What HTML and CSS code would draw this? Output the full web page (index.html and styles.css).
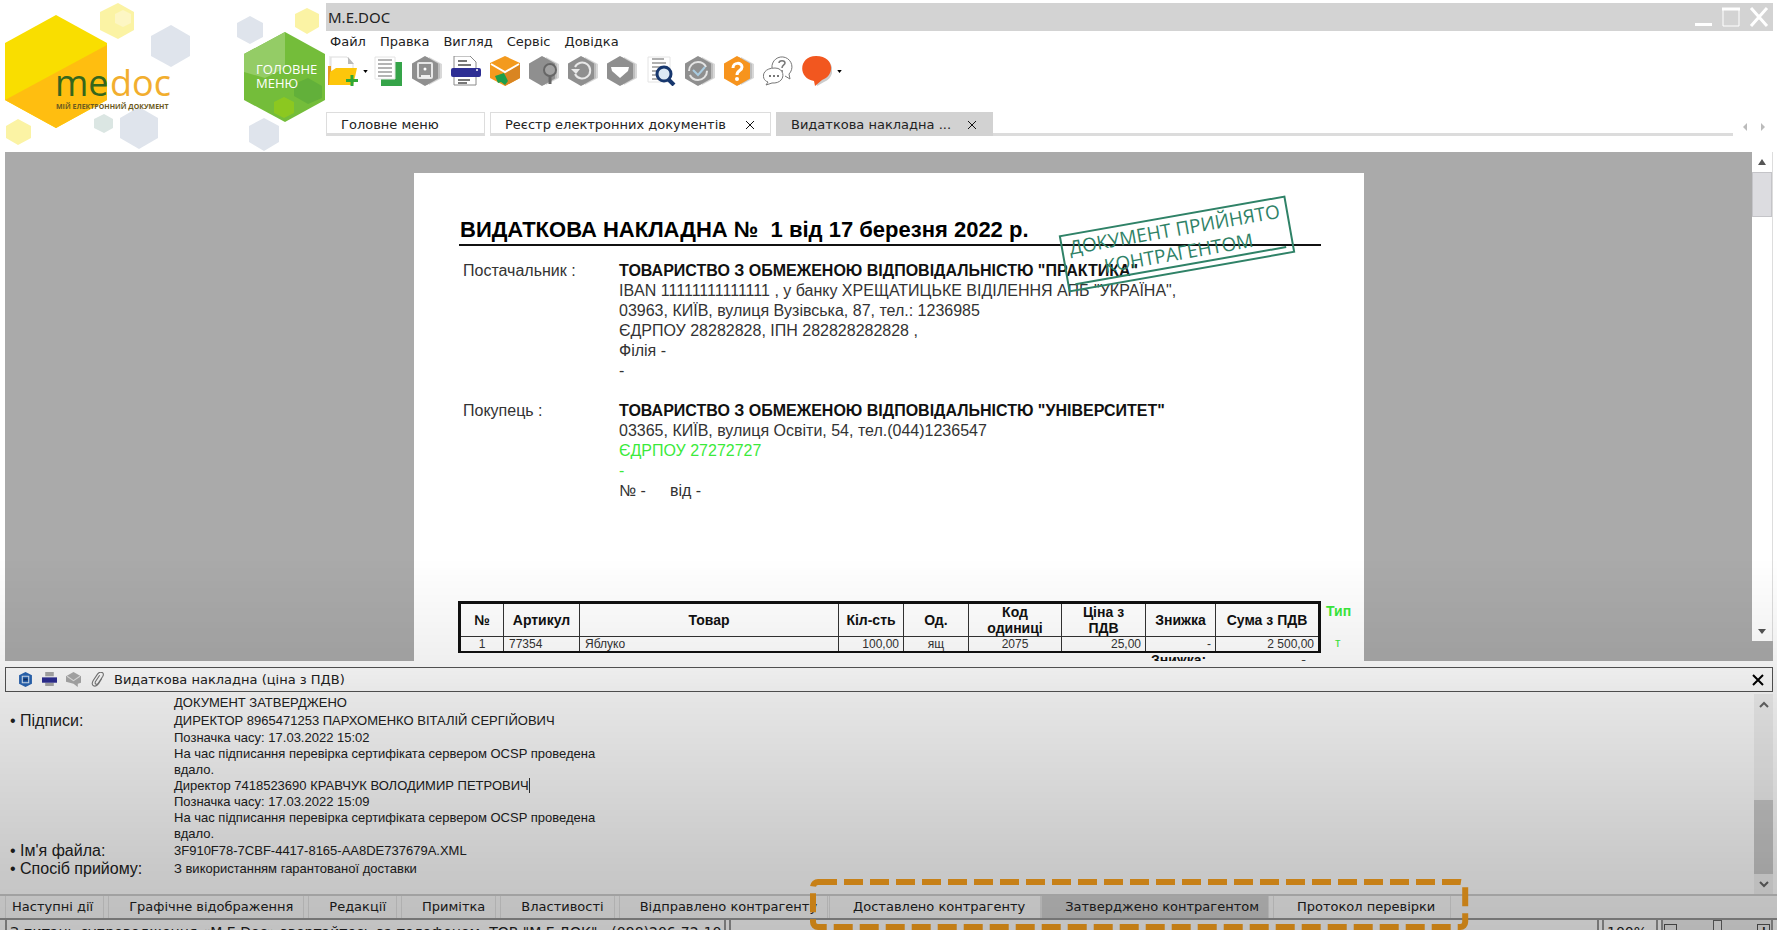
FILE: index.html
```html
<!DOCTYPE html>
<html lang="uk">
<head>
<meta charset="utf-8">
<title>M.E.DOC</title>
<link rel="stylesheet" href="styles.css">
</head>
<body>
<svg class="defs" aria-hidden="true">
  <symbol id="hex" viewBox="0 0 30 30">
    <path d="M17 1l13 7v14l-13 7z" fill="#d8d8d8"/>
    <path d="M15 1l13 7v14l-13 7z" fill="#bdbdbd"/>
    <path d="M13 0l13 7.500v15L13 30 0 22.500v-15z" fill="currentColor"/>
  </symbol>
</svg>

<header class="header">
  <div class="brand">
    <svg class="logo" viewBox="0 0 326 152" role="img" aria-label="me doc">
      <path d="M118 3l16 9v18l-16 9-18-9V12z" fill="#fbf3a4"/>
      <path d="M123 10l8 4v9l-8 4-8-4v-9z" fill="#fdf6c4"/>
      <path d="M171 25l19 11v20l-19 11-20-11V36z" fill="#dfe4ec"/>
      <path d="M139 107l19 11v20l-19 11-19-11v-20z" fill="#dfe4ec"/>
      <path d="M104 114l9 5v9l-9 5-10-5v-9z" fill="#dbe6e3"/>
      <path d="M18 119l13 7v12l-13 7-12-7v-12z" fill="#fbf3a4"/>
      <path d="M56 15l51 28v57l-51 28L5 100V43z" fill="#f9de00"/>
      <path d="M107 45v55l-51 28L5 100z" fill="#ffbe10"/>
      <text x="55" y="96" class="logo-me">me</text>
      <text x="110" y="96" class="logo-doc">doc</text>
      <text x="56" y="109" class="logo-sub">МІЙ ЕЛЕКТРОННИЙ ДОКУМЕНТ</text>
      <path d="M250 16l13 7v14l-13 7-13-7V23z" fill="#dfe4ec"/>
      <path d="M307 8l12 6v13l-12 7-12-7V14z" fill="#fbf3a4"/>
      <path d="M264 118l15 8v16l-15 9-15-9v-16z" fill="#dfe4ec"/>
      <path d="M285 32l40 22v46l-40 22-41-22V54z" fill="#74bd3a"/>
      <path d="M285 32v36l-20 10-21-6V54z" fill="#94cc66"/>
      <path d="M308 78l14 8v12l-14 6-14-8V84z" fill="#62b03a"/>
      <path d="M284 97l10 5v11l-10 5-10-5v-11z" fill="#8cc820"/>
      <text x="256" y="74" class="main-menu">ГОЛОВНЕ</text>
      <text x="256" y="88" class="main-menu">МЕНЮ</text>
    </svg>
  </div>
  <div class="top">
    <div class="titlebar">
      <span class="app-name">M.E.DOC</span>
      <div class="win-buttons">
        <button aria-label="Згорнути"><svg width="18" height="20"><path d="M0 17.500h17" stroke="#fff" stroke-width="3"/></svg></button>
        <button aria-label="Розгорнути"><svg width="18" height="20"><path d="M1 2v17h16V2" fill="none" stroke="#fff"/><path d="M0 2h18" stroke="#fff" stroke-width="3"/></svg></button>
        <button aria-label="Закрити"><svg width="20" height="20"><path d="M2 1l16 18M18 1L2 19" stroke="#fff" stroke-width="3"/></svg></button>
      </div>
    </div>
    <nav class="menu">
      <button>Файл</button><button>Правка</button><button>Вигляд</button><button>Сервіс</button><button>Довідка</button>
    </nav>
    <div class="toolbar">
      <button aria-label="Створити"><svg viewBox="0 0 30 30"><path d="M2 0v16M3 1h16l6 7v8H3z" fill="#fff" stroke="#ddd"/><path d="M20 1l6 7h-6z" fill="#b9b9b9"/><path d="M0 10h3v19H0z" fill="#e79a1c"/><path d="M2 16l6-4h21l-2 9-2 8H1z" fill="#fdc60b"/><path d="M24 19v11M18 24.500h12" stroke="#2fa836" stroke-width="3"/></svg></button><svg class="caret" viewBox="0 0 6 4"><path d="M0 0h6L3 4z"/></svg>
      <button aria-label="Копіювати"><svg viewBox="0 0 30 30"><path d="M21 6h8v24H8v-7h13z" fill="#35a449"/><path d="M2 1h20v22H2z" fill="#fff" stroke="#e4e4e4"/><path d="M5 4h14M5 8h14M5 12h14M5 16h14M5 20h14" stroke="#b4b4b4" stroke-width="2"/></svg></button>
      <button class="grey" aria-label="Зберегти"><svg viewBox="0 0 30 30"><use href="#hex"/><rect x="6" y="7" width="14" height="15" rx="1" fill="none" stroke="#e6e6e6" stroke-width="2"/><circle cx="13" cy="13" r="1.500" fill="#fff"/><path d="M9 19h9v3H9z" fill="#eee"/></svg></button>
      <button aria-label="Друк"><svg viewBox="0 0 30 30"><path d="M3 0v29h22V6l-6-6z" fill="#fff" stroke="#8a8a8a"/><path d="M7 5h9M7 9h13M7 24h12M7 27h9" stroke="#777" stroke-width="2"/><rect y="12" width="30" height="9" rx="2" fill="#2d2e94"/><circle cx="26" cy="14" r="1" fill="#fff"/></svg></button>
      <button class="orange" aria-label="Надіслати"><svg viewBox="0 0 30 30"><path d="M15 0l15 7v15l-15 8L0 22V7z" fill="#f39a1e"/><path d="M15 17l15-9v14l-15 8z" fill="#d98521"/><path d="M1 8l14 8 14-8" fill="none" stroke="#fff" stroke-width="2"/><path d="M5 20l9-3 4 8-3 4-4-3-3 1z" fill="#1c9e4b"/></svg></button>
      <button class="grey" aria-label="Пошук контрагента"><svg viewBox="0 0 30 30"><use href="#hex"/><circle cx="21" cy="14" r="6" fill="#a2a2a2" stroke="#666" stroke-width="2"/><path d="M21 20v8" stroke="#666" stroke-width="3"/></svg></button>
      <button class="grey" aria-label="Повернути"><svg viewBox="0 0 30 30"><use href="#hex"/><path d="M7 18a8 8 0 1 0 0-7" fill="none" stroke="#e8e8e8" stroke-width="2"/><path d="M3 13h9l-4 5z" fill="#e8e8e8"/></svg></button>
      <button class="grey" aria-label="Отримати"><svg viewBox="0 0 30 30"><use href="#hex"/><path d="M4 11h18l-1 4-8 7-8-7z" fill="#fff"/></svg></button>
      <button aria-label="Перегляд"><svg viewBox="0 0 30 30"><path d="M2 1h22v25H2z" fill="#fff" stroke="#e4e4e4"/><path d="M6 3h12M6 7h14M6 11h12M6 15h8M6 19h8M6 23h9" stroke="#b0b0b0" stroke-width="2"/><circle cx="18" cy="18" r="7" fill="#dbe8f4" stroke="#17376e" stroke-width="3"/><path d="M22 23l6 6" stroke="#17376e" stroke-width="4"/></svg></button>
      <button class="grey" aria-label="Перевірити"><svg viewBox="0 0 30 30"><use href="#hex"/><circle cx="13" cy="15" r="9" fill="none" stroke="#e4e4e4" stroke-width="2" stroke-dasharray="24 4"/><path d="M8 14l5 5 7-8" fill="none" stroke="#a9cbe0" stroke-width="2"/></svg></button>
      <button class="orange" aria-label="Довідка"><svg viewBox="0 0 30 30"><use href="#hex"/><path d="M9 12c0-6 9-6 9-1 0 4-5 3-5 8" fill="none" stroke="#fff" stroke-width="3"/><circle cx="13" cy="23" r="2" fill="#fff"/></svg></button>
      <button aria-label="Чат"><svg viewBox="0 0 30 30" fill="none" stroke="#777"><path d="M9 12a10 10 0 1 1 17 6l1 5-5-3"/><path d="M16 7c0-3 6-3 6 0 0 2-3 2-3 5M19 14v2" stroke-width="1.500"/><path d="M12 12c-14 0-14 12-7 14l-2 3 6-2c14 1 14-15 3-15z" fill="#fff"/><path d="M6 20h2M10 20h2M14 20h2" stroke-width="2"/></svg></button>
      <button aria-label="Повідомлення"><svg viewBox="0 0 30 30"><path d="M16 2c18 0 18 20 6 24l-7 4-1-4z" fill="#ccc"/><path d="M14 0c19 0 19 20 6 24l-7 6-1-5C-5 22-3 0 14 0z" fill="#f2571f"/></svg></button><svg class="caret" viewBox="0 0 6 4"><path d="M0 0h6L3 4z"/></svg>
    </div>
    <div class="tabs">
      <div class="tab tab-home"><button>Головне меню</button></div>
      <div class="tab tab-list"><button>Реєстр електронних документів</button><button class="tab-x" aria-label="Закрити вкладку"><svg viewBox="0 0 8 8"><path d="M0 0l8 8M8 0L0 8"/></svg></button></div>
      <div class="tab tab-active"><button>Видаткова накладна ...</button><button class="tab-x" aria-label="Закрити вкладку"><svg viewBox="0 0 8 8"><path d="M0 0l8 8M8 0L0 8"/></svg></button></div>
      <div class="tab-scroll"><button aria-label="Назад"><svg width="4" height="8"><path d="M4 0v8L0 4z"/></svg></button><button aria-label="Вперед"><svg width="4" height="8"><path d="M0 0v8l4-4z"/></svg></button></div>
    </div>
  </div>
</header>

<main class="viewer">
  <article class="paper">
    <h1 class="doc-title">ВИДАТКОВА НАКЛАДНА №&nbsp; 1 від 17 березня 2022 р.</h1>
    <div class="party">
      <div>Постачальник :</div>
      <div>
        <b>ТОВАРИСТВО З ОБМЕЖЕНОЮ ВІДПОВІДАЛЬНІСТЮ "ПРАКТИКА"</b>
        <p>IBAN 11111111111111 , у банку ХРЕЩАТИЦЬКЕ ВІДІЛЕННЯ АПБ "УКРАЇНА",</p>
        <p>03963, КИЇВ, вулиця Вузівська, 87, тел.: 1236985</p>
        <p>ЄДРПОУ 28282828, ІПН 282828282828 ,</p>
        <p>Філія -</p>
        <p>-</p>
      </div>
    </div>
    <div class="party buyer">
      <div>Покупець :</div>
      <div>
        <b>ТОВАРИСТВО З ОБМЕЖЕНОЮ ВІДПОВІДАЛЬНІСТЮ "УНІВЕРСИТЕТ"</b>
        <p>03365, КИЇВ, вулиця Освіти, 54, тел.(044)1236547</p>
        <p class="green">ЄДРПОУ 27272727</p>
        <p class="green">-</p>
        <p><span class="number">№ -</span>від -</p>
      </div>
    </div>
    <div class="goods-row">
      <table class="goods">
        <colgroup><col class="c1"><col class="c2"><col><col class="c4"><col class="c4"><col class="c6"><col class="c7"><col class="c8"><col class="c9"></colgroup>
        <thead><tr><th>№</th><th>Артикул</th><th>Товар</th><th>Кіл-сть</th><th>Од.</th><th>Код<br>одиниці</th><th>Ціна з<br>ПДВ</th><th>Знижка</th><th>Сума з ПДВ</th></tr></thead>
        <tbody><tr><td class="mid">1</td><td>77354</td><td>Яблуко</td><td class="num">100,00</td><td class="mid">ящ</td><td class="mid">2075</td><td class="num">25,00</td><td class="num">-</td><td class="num">2 500,00</td></tr></tbody>
      </table>
      <div class="side green"><b>Тип</b><span>т</span></div>
    </div>
    <div class="total"><span>Знижка:</span><span class="total-sum">-</span></div>
    <div class="stamp"><div>ДОКУМЕНТ ПРИЙНЯТО</div><div>КОНТРАГЕНТОМ</div></div>
  </article>
  <div class="vscroll">
    <button aria-label="Вгору"><svg width="8" height="6"><path d="M0 6h8L4 0z" fill="#555"/></svg></button>
    <div class="vthumb"></div>
    <button aria-label="Вниз"><svg width="8" height="5"><path d="M0 0h8L4 5z" fill="#555"/></svg></button>
  </div>
</main>

<section class="panel">
  <div class="panel-head">
    <svg viewBox="0 0 14 14"><path d="M7 0l6 3v8l-6 3-6-3V3z" fill="#2a66b5"/><path d="M4 4h6v6H4z" fill="none" stroke="#d8e6f6" stroke-width="1"/><path d="M5 6h4v2H5z" fill="#12356f"/></svg>
    <svg viewBox="0 0 14 14"><path d="M3 0h8v4H3zM3 10h8v3H3z" fill="#aaa"/><path d="M0 5h14v5H0z" fill="#2d2e94"/></svg>
    <svg viewBox="0 0 14 14"><path d="M7 0l7 4v6l-3 1v3l-4-3-7-2V4z" fill="#adadad"/><path d="M1 4l6 4 6-4" fill="none" stroke="#e6e6e6"/></svg>
    <svg viewBox="0 0 14 14"><path d="M9 3L5 9c-1 3 2 3 3 1l4-6c2-4-3-5-5-2L3 8c-3 5 2 7 5 3l3-5" fill="none" stroke="#777"/></svg>
    <h2>Видаткова накладна (ціна з ПДВ)</h2>
    <button class="panel-x" aria-label="Закрити панель"><svg width="12" height="12"><path d="M1 1l10 10M11 1L1 11" stroke="#000" stroke-width="2"/></svg></button>
  </div>
  <div class="panel-body">
    <div class="details">
      <span></span><div>ДОКУМЕНТ ЗАТВЕРДЖЕНО</div>
      <span class="label">• Підписи:</span>
      <div>ДИРЕКТОР 8965471253 ПАРХОМЕНКО ВІТАЛІЙ СЕРГІЙОВИЧ
        <div class="stamps">
          <p>Позначка часу: 17.03.2022 15:02</p>
          <p>На час підписання перевірка сертифіката сервером OCSP проведена<br>вдало.</p>
          <p><span class="cursor">Директор 7418523690 КРАВЧУК ВОЛОДИМИР ПЕТРОВИЧ</span></p>
          <p>Позначка часу: 17.03.2022 15:09</p>
          <p>На час підписання перевірка сертифіката сервером OCSP проведена<br>вдало.</p>
        </div>
      </div>
      <span class="label">• Ім'я файла:</span><div>3F910F78-7CBF-4417-8165-AA8DE737679A.XML</div>
      <span class="label">• Спосіб прийому:</span><div>З використанням гарантованої доставки</div>
    </div>
    <div class="pscroll">
      <button aria-label="Вгору"><svg width="10" height="7"><path d="M1 6l4-4 4 4" fill="none" stroke="#666" stroke-width="2"/></svg></button>
      <div class="pthumb"></div>
      <button aria-label="Вниз"><svg width="10" height="7"><path d="M1 1l4 4 4-4" fill="none" stroke="#666" stroke-width="2"/></svg></button>
    </div>
  </div>
  <div class="btabs">
    <button class="first">Наступні дії</button>
    <button>Графічне відображення</button>
    <button>Редакції</button>
    <button>Примітка</button>
    <button>Властивості</button>
    <button class="sent">Відправлено контрагенту</button>
    <div class="marked">
      <button>Доставлено контрагенту</button>
      <button class="current">Затверджено контрагентом</button>
      <button>Протокол перевірки</button>
      <svg class="marker"><rect width="100%" height="100%" rx="5"/></svg>
    </div>
  </div>
</section>

<footer class="status">
  <div class="support">З питань супроводження «M.E.Doc» звертайтесь за телефоном: ТОВ "М.Е.ДОК" - (098)206-72-10</div>
  <div class="blank"></div>
  <div class="percent">100%</div>
  <div class="zoom"><button aria-label="Зменшити">−</button><input type="range" min="0" max="200" value="100" aria-label="Масштаб"><button aria-label="Збільшити">+</button></div>
</footer>
</body>
</html>
```
FILE: styles.css
```css
* { box-sizing: border-box; }
body {
  margin: 0;
  height: 100vh;
  overflow: hidden;
  display: flex;
  flex-direction: column;
  background: #fff;
  color: #222;
  font: 13px/16px "DejaVu Sans", sans-serif;
}
body::after {
  content: "";
  position: fixed;
  inset: 60vh 0 0 0;
  z-index: 5;
  pointer-events: none;
  background: linear-gradient(rgba(0,0,0,0), rgba(0,0,0,.06) 27%, rgba(0,0,0,.1) 38%, rgba(0,0,0,.21) 83%, rgba(0,0,0,.24));
}
button { margin: 0; padding: 0; border: 0; background: none; font: inherit; color: inherit; white-space: nowrap; }
svg { display: block; }
p, h1, h2 { margin: 0; font-size: inherit; font-weight: normal; }
.defs { position: absolute; width: 0; height: 0; }

.header { display: flex; height: 152px; flex: none; }
.brand { width: 326px; flex: none; }
.logo { width: 326px; height: 152px; }
.logo-me, .logo-doc { font: 36px "Open Sans", sans-serif; fill: #35661c; }
.logo-doc { fill: #f2ae2e; }
.logo-sub { font: bold 7px "Open Sans", sans-serif; fill: #6b5a20; }
.main-menu { font: 13px "Open Sans", sans-serif; fill: #fff; }

.top { flex: 1; min-width: 0; padding-top: 3px; }
.titlebar { height: 28px; margin-right: 4px; padding: 0 4px 0 2px; background: #d3d3d3; display: flex; align-items: center; justify-content: space-between; }
.app-name { font: 15px/20px "Noto Sans", sans-serif; }
.win-buttons { display: flex; gap: 9px; }
.menu { display: flex; align-items: flex-start; gap: 14px; padding: 3px 4px 0; height: 23px; }
.toolbar { display: flex; align-items: center; gap: 9px; height: 34px; padding-left: 2px; }
.toolbar button svg { width: 30px; height: 30px; }
.caret { width: 5px; height: 3px; margin: 0 -4px; }
.grey { color: #8f8f8f; }
.orange { color: #f7941d; }

.tabs { display: flex; gap: 5px; height: 24px; margin-top: 24px; margin-right: 12px; }
.tabs::after { content: ""; flex: 1; order: 1; margin: 21px 0 0 -5px; background: #dcdcdc; height: 3px; }
.tab { display: flex; align-items: center; justify-content: space-between; padding: 4px 16px 0 14px; border: 1px solid #ddd; border-bottom: 3px solid #dcdcdc; }
.tab-home { width: 159px; }
.tab-list { width: 281px; }
.tab-active { width: 217px; background: #d2d2d2; border-color: #d2d2d2; }
.tab-x svg { width: 8px; height: 8px; stroke: #111; stroke-width: 1; }
.tab-scroll { order: 2; display: flex; gap: 14px; align-items: center; padding: 6px 0 0 5px; fill: #bbb; }

.viewer { flex: 1; min-height: 0; margin: 0 4px 0 5px; background: #aaa; overflow: hidden; display: grid; grid-template-columns: 1fr 950px 1fr; grid-template-rows: 100%; }
.paper { grid-column: 2; position: relative; margin-top: 21px; padding: 44px 14px 0 45px; background: #fff; font: 16px/20px "Liberation Sans", sans-serif; color: #333; white-space: nowrap; }
.doc-title { margin-right: 29px; padding: 0 1px; height: 29px; border-bottom: 2px solid #111; font-weight: bold; font-size: 22px; line-height: 26px; color: #000; }
.party { display: grid; grid-template-columns: 156px 1fr; margin-top: 15px; padding-left: 4px; }
.party b { color: #111; }
.buyer { margin-top: 20px; }
.green, .party .green { color: #3bea3b; }
.number { margin-right: 24px; }
.goods-row { display: flex; gap: 5px; margin: 100px 0 0 -1px; }
.goods { flex: none; width: 863px; table-layout: fixed; border-collapse: collapse; border: 3px solid #111; border-bottom-width: 2px; color: #333; }
.goods th, .goods td { border: 1px solid #333; padding: 0; }
.goods th { height: 34px; font-size: 14px; line-height: 16px; color: #111; }
.goods td { height: 15px; padding: 0 5px; font-size: 12px; line-height: 13px; }
.goods .mid { text-align: center; }
.goods .num { text-align: right; padding-right: 4px; }
.c1 { width: 44px; } .c2 { width: 76px; } .c4 { width: 65px; } .c6 { width: 93px; } .c7 { width: 84px; } .c8 { width: 70px; } .c9 { width: 104px; }
.side { display: flex; flex-direction: column; gap: 12px; font-size: 14px; }
.side span { padding-left: 9px; font-size: 12px; }
.total { display: flex; gap: 95px; margin-left: 692px; font-weight: bold; font-size: 14px; line-height: 14px; color: #111; }
.stamp { position: absolute; left: 648px; top: 42px; width: 230px; height: 58px; border: 2px solid #2f8267; transform: rotate(-10deg); color: #2f8267; font: 19px/24px "Open Sans", sans-serif; text-align: center; }
.stamp::after { content: ""; position: absolute; left: 6px; right: 6px; bottom: 4px; height: 2px; background: #2f8267; }

.vscroll { grid-column: 3; justify-self: end; width: 21px; margin-bottom: 20px; background: #fff; display: flex; flex-direction: column; border-right: 1px solid #ddd; }
.vscroll button { height: 20px; display: grid; place-items: center; }
.vthumb { height: 45px; background: #dcdce0; border: 1px solid #c4c4c8; margin-bottom: auto; }

.panel { flex: none; padding-top: 6px; }
.panel-head { display: flex; align-items: center; gap: 9px; height: 25px; margin: 0 4px 0 5px; padding: 0 8px 0 12px; border: 1px solid #555; }
.panel-head > svg { width: 15px; height: 15px; }
.panel-head h2 { flex: 1; }
.panel-body { display: flex; justify-content: space-between; height: 202px; padding: 2px 4px 0 10px; }
.details { display: grid; grid-template-columns: 164px auto; align-content: start; font: 13px/18px "Liberation Sans", sans-serif; }
.label { font-size: 16px; }
.stamps { line-height: 16px; }
.cursor { border-right: 1px solid #333; }
.pscroll { width: 19px; background: rgba(0,0,0,.05); display: flex; flex-direction: column; }
.pscroll button { height: 20px; display: grid; place-items: center; }
.pthumb { height: 74px; margin-top: auto; background: #cdcdcd; }

.btabs { display: flex; gap: 4px; height: 24px; padding-left: 5px; border-top: 2px solid #d0d0d0; background: #fafafa; }
.btabs button { padding: 0 10px 0 20px; border: 1px solid #e4e4e4; border-width: 0 1px; }
.btabs .first { padding: 0 10px 0 6px; }
.btabs .sent { margin-right: -3px; }
.marked { display: flex; gap: 4px; position: relative; }
.marked button { padding: 0 15px 0 23px; }
.btabs .current { background: #d2d2d2; margin-left: -4px; padding-right: 9px; }
.marker { position: absolute; left: -16px; top: -14px; width: calc(100% + 30px); height: 45px; overflow: visible; z-index: 2; }
.marker rect { fill: none; stroke: #ffa51e; stroke-width: 6; stroke-dasharray: 19 7; }

.status { flex: none; display: flex; gap: 3px; height: 12px; padding: 0 4px 0 5px; overflow: hidden; border-top: 2px solid #999; }
.status > div { height: 24px; border: 1px solid #999; border-width: 0 2px; padding: 4px 3px 0; white-space: nowrap; font-size: 14px; }
.support { width: 721px; }
.blank { flex: 1; }
.percent { width: 56px; }
.status .zoom { display: flex; align-items: flex-start; width: 112px; padding: 4px 1px; background: #eee; }
.zoom button { width: 13px; height: 14px; border: 1px solid #555; line-height: 12px; font-weight: bold; }
.zoom input { flex: 1; min-width: 0; height: 20px; margin: -4px 0 0; appearance: none; background: none; }
.zoom input::-webkit-slider-thumb { appearance: none; width: 9px; height: 20px; border: 1px solid #666; background: #f4f4f4; }
```
